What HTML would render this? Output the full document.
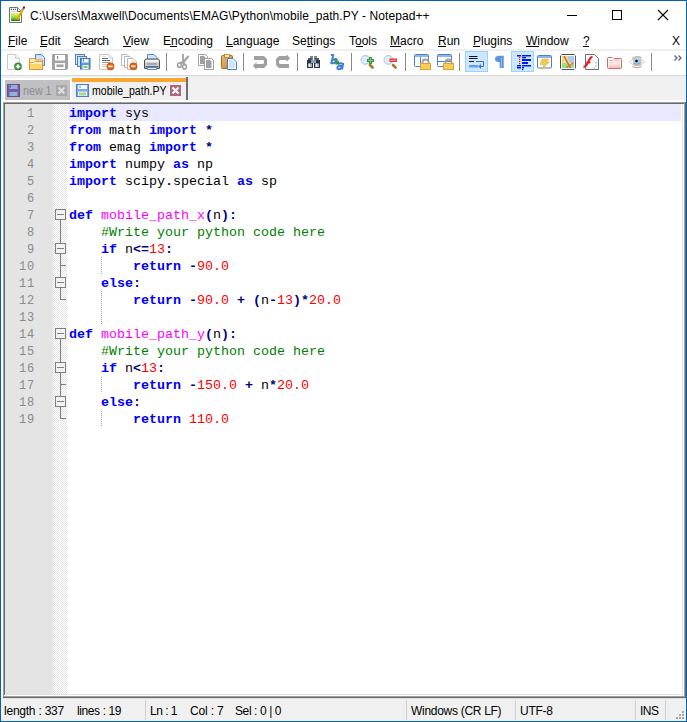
<!DOCTYPE html><html><head><meta charset="utf-8"><style>
*{margin:0;padding:0;box-sizing:border-box}
html,body{width:687px;height:722px;overflow:hidden;background:#fff}
body{position:relative;font-family:"Liberation Sans",sans-serif;font-size:12px;color:#000}
.a{position:absolute}
.t{position:absolute;white-space:pre;line-height:14px;height:14px;transform-origin:0 0}
.u{position:absolute;height:1px;background:#000}
svg{position:absolute;overflow:visible}
.code{position:absolute;left:69px;top:105px;font-family:"Liberation Mono",monospace;font-size:13.333px}
.ln{height:17px;line-height:17px;white-space:pre}
.k{color:#0000ff;font-weight:bold}
.o{color:#000080;font-weight:bold}
.n{color:#ff0000}
.f{color:#ff00ff}
.c{color:#008000}
.nums{position:absolute;left:5px;top:106px;width:30px;font-family:"Liberation Mono",monospace;font-size:12px;letter-spacing:0.8px;color:#8a8a8a;text-align:right}
.nums div{height:17px;line-height:17px}
.sep{position:absolute;width:1px;background:#888}
</style></head><body>
<div class="t" style="left:30px;top:9px;letter-spacing:0.078px">C:\Users\Maxwell\Documents\EMAG\Python\mobile_path.PY - Notepad++</div>
<svg style="left:9px;top:7px" width="16" height="16" viewBox="0 0 16 16">
<defs><linearGradient id="gn" x1="0" y1="0" x2="0" y2="1"><stop offset="0" stop-color="#f0f088"/><stop offset="0.45" stop-color="#a8e040"/><stop offset="0.8" stop-color="#50b030"/><stop offset="1" stop-color="#0a7a0a"/></linearGradient></defs>
<path d="M0.5 0.5H8.5L12.5 4.5V15.5H0.5Z" fill="#fff" stroke="#707070"/>
<path d="M8.5 0.5V4.5H12" fill="#fff" stroke="#707070"/>
<rect x="1.8" y="1.8" width="1.2" height="1.2" fill="#555"/><rect x="3.8" y="1.8" width="1.2" height="1.2" fill="#555"/><rect x="5.8" y="1.8" width="1.2" height="1.2" fill="#555"/>
<path d="M2 4.5H8" stroke="#c0d4ec"/>
<rect x="2" y="6" width="9" height="8" fill="url(#gn)"/>
<path d="M8 13L13.8 2.5" stroke="#f0a800" stroke-width="2.4"/>
<path d="M13.6 2.8L14.6 1" stroke="#7a9ad0" stroke-width="2"/>
<rect x="14" y="-0.5" width="2" height="2" fill="#a80000"/>
<path d="M7.6 13.6L8.2 12.4" stroke="#5a4020" stroke-width="1.2"/>
</svg>
<div class="a" style="left:567px;top:15px;width:10px;height:1px;background:#000"></div>
<div class="a" style="left:612px;top:10px;width:10px;height:10px;border:1px solid #000"></div>
<svg style="left:658px;top:10px" width="10" height="10" viewBox="0 0 10 10"><path d="M0 0L10 10M10 0L0 10" stroke="#000" stroke-width="1.1"/></svg>
<div class="t" style="left:8px;top:34px;letter-spacing:0">File</div>
<div class="t" style="left:40px;top:34px;letter-spacing:0">Edit</div>
<div class="t" style="left:74px;top:34px;letter-spacing:-0.6px">Search</div>
<div class="t" style="left:123px;top:34px;letter-spacing:0">View</div>
<div class="t" style="left:163px;top:34px;letter-spacing:0">Encoding</div>
<div class="t" style="left:226px;top:34px;letter-spacing:0">Language</div>
<div class="t" style="left:292px;top:34px;letter-spacing:0">Settings</div>
<div class="t" style="left:349px;top:34px;letter-spacing:0">Tools</div>
<div class="t" style="left:390px;top:34px;letter-spacing:0">Macro</div>
<div class="t" style="left:438px;top:34px;letter-spacing:0">Run</div>
<div class="t" style="left:473px;top:34px;letter-spacing:0">Plugins</div>
<div class="t" style="left:526px;top:34px;letter-spacing:0">Window</div>
<div class="t" style="left:583px;top:34px;letter-spacing:0">?</div>
<div class="t" style="left:672px;top:34px">X</div>
<div class="u" style="left:8px;top:46px;width:7px"></div>
<div class="u" style="left:40px;top:46px;width:7px"></div>
<div class="u" style="left:74px;top:46px;width:7px"></div>
<div class="u" style="left:123px;top:46px;width:8px"></div>
<div class="u" style="left:170px;top:46px;width:7px"></div>
<div class="u" style="left:226px;top:46px;width:7px"></div>
<div class="u" style="left:307px;top:46px;width:5px"></div>
<div class="u" style="left:356px;top:46px;width:7px"></div>
<div class="u" style="left:390px;top:46px;width:11px"></div>
<div class="u" style="left:438px;top:46px;width:8px"></div>
<div class="u" style="left:473px;top:46px;width:7px"></div>
<div class="u" style="left:526px;top:46px;width:13px"></div>
<div class="u" style="left:583px;top:46px;width:6px"></div>
<div class="a" style="left:1px;top:49px;width:685px;height:2px;background:#f0f0f0"></div>
<div class="sep" style="left:166px;top:53px;height:18px"></div>
<div class="sep" style="left:243px;top:53px;height:18px"></div>
<div class="sep" style="left:297px;top:53px;height:18px"></div>
<div class="sep" style="left:351px;top:53px;height:18px"></div>
<div class="sep" style="left:405px;top:53px;height:18px"></div>
<div class="sep" style="left:459px;top:53px;height:18px"></div>
<div class="sep" style="left:651px;top:53px;height:18px"></div>
<div class="a" style="left:465px;top:51px;width:23px;height:21px;background:#cce8ff;border:1px solid #99d1ff"></div>
<div class="a" style="left:511px;top:51px;width:23px;height:21px;background:#cce8ff;border:1px solid #99d1ff"></div>
<svg style="left:674px;top:55px" width="8" height="6" viewBox="0 0 8 6"><path d="M0.5 0.5L3 3L0.5 5.5M4.5 0.5L7 3L4.5 5.5" fill="none" stroke="#5b5ba0" stroke-width="1.3"/></svg>
<svg style="left:6px;top:54px" width="16" height="16" viewBox="0 0 16 16"><path d="M1.5 0.5H9.5L13.5 4.5V15.5H1.5Z" fill="#fff" stroke="#c8c8c8"/><path d="M9.5 0.5V4.5H13.5" fill="#f0f0f0" stroke="#d0d0d0"/>
<path d="M3 3h5M3 5h5" stroke="#f0f0f0"/>
<circle cx="12" cy="12.4" r="3.6" fill="#3f9a3f" stroke="#2c7a2c" stroke-width="0.7"/><path d="M12 10.2V14.6M9.8 12.4H14.2" stroke="#fff" stroke-width="1.5"/></svg>
<svg style="left:29px;top:54px" width="16" height="16" viewBox="0 0 16 16"><path d="M6.5 0.5H12.5L15.5 3.5V11.5H6.5Z" fill="#cfe2fb" stroke="#4a86d8"/>
<path d="M0.5 4.5H6L7 6H13.5V15.5H0.5Z" fill="#fdf0c0" stroke="#e2932d"/><rect x="1" y="10" width="12" height="5" fill="#f7d96a"/><path d="M1 8.5H4.5L5.5 7.5H13" stroke="#eaa040" fill="none"/></svg>
<svg style="left:52px;top:54px" width="16" height="16" viewBox="0 0 16 16"><path d="M0.5 0.5H15.5V14.5L14.5 15.5H0.5Z" fill="#a3a3a3" stroke="#a0a0a0"/><rect x="3" y="1" width="10" height="5.5" fill="#fff"/><rect x="5" y="2" width="1.2" height="3" fill="#8a8a8a"/>
<rect x="3" y="9" width="10" height="6" fill="#fff"/><rect x="4.5" y="10.5" width="7" height="2.5" fill="#a0a0a0"/></svg>
<svg style="left:75px;top:54px" width="16" height="16" viewBox="0 0 16 16"><rect x="0.5" y="0.5" width="9" height="10" fill="#d8e6f8" stroke="#4d7fc8"/><rect x="2.5" y="2.5" width="9" height="10" fill="#d8e6f8" stroke="#4d7fc8"/>
<rect x="5.5" y="4.5" width="9.5" height="10.5" fill="#5d9be0" stroke="#3a6fb8"/><rect x="7" y="5" width="6.5" height="3.5" fill="#fff"/><rect x="8" y="5.5" width="1" height="2" fill="#3a6fb8"/><rect x="7.5" y="11" width="6" height="4" fill="#fff"/><rect x="8.5" y="12" width="4" height="2" fill="#7ad04a"/></svg>
<svg style="left:99px;top:54px" width="16" height="16" viewBox="0 0 16 16"><path d="M0.5 0.5H10L13.5 4V15.5H0.5Z" fill="#fff" stroke="#c4c4c4"/><path d="M10 0.5V4H13.5" fill="none" stroke="#d8d8d8"/>
<path d="M3 2.5H8" stroke="#e8e8e8"/><path d="M3 4.5H9M3 6.5H11" stroke="#6a6a6a"/><path d="M3 8.5H11" stroke="#9a9a9a"/><path d="M3 10.5H8M3 12.5H8" stroke="#c8c8c8"/>
<circle cx="11.5" cy="12.4" r="3.6" fill="#e86010" stroke="#c84800" stroke-width="0.6"/><path d="M9.4 12.4H13.6" stroke="#fff" stroke-width="1.6"/></svg>
<svg style="left:121px;top:54px" width="16" height="16" viewBox="0 0 16 16"><path d="M0.5 0.5H6L8.5 3V11.5H0.5Z" fill="#fff" stroke="#b8b8b8"/><path d="M3.5 2.5H9L11.5 5V13.5H3.5Z" fill="#fff" stroke="#b8b8b8"/><path d="M6.5 4.5H12L15.5 8V15.5H6.5Z" fill="#fff" stroke="#b8b8b8"/>
<path d="M8.5 7.5H12" stroke="#e8e8e8"/>
<circle cx="12.4" cy="12.3" r="3.6" fill="#e86010" stroke="#c84800" stroke-width="0.6"/><path d="M10.3 12.3H14.5" stroke="#fff" stroke-width="1.6"/></svg>
<svg style="left:144px;top:54px" width="16" height="16" viewBox="0 0 16 16"><path d="M3.5 0.5H10L13 3.5V7.5H3.5Z" fill="#d2e6fb" stroke="#4a8ad8"/>
<path d="M0.5 7Q0.5 5 2.5 5H13.5Q15.5 5 15.5 7V14.5H0.5Z" fill="#d0d0d0" stroke="#505050"/><rect x="1.5" y="6" width="13" height="2" fill="#f4f4f4"/><rect x="3" y="9" width="10" height="2" fill="#a8a8a8"/><rect x="1.5" y="12" width="13" height="1.5" fill="#666"/>
<path d="M3.5 13.5H12.5V15.5H3.5Z" fill="#eef6ff" stroke="#4a8ad8"/></svg>
<svg style="left:177px;top:54px" width="16" height="16" viewBox="0 0 16 16"><path d="M6 0V9" stroke="#a0a0a0" stroke-width="1.8"/><path d="M11.5 2L6.5 8" stroke="#a0a0a0" stroke-width="2"/>
<ellipse cx="2.4" cy="11.2" rx="1.8" ry="2.2" fill="none" stroke="#a0a0a0" stroke-width="1.6"/><ellipse cx="7.5" cy="12.8" rx="1.9" ry="2.3" fill="none" stroke="#a0a0a0" stroke-width="1.6"/><path d="M2.5 8.8L6 8.5L8 10.5" stroke="#a0a0a0" stroke-width="2" fill="none"/></svg>
<svg style="left:198px;top:54px" width="16" height="16" viewBox="0 0 16 16"><path d="M0.5 0.5H7.5L9.5 2.5V11.5H0.5Z" fill="#fff" stroke="#a0a0a0"/><path d="M2 2H6L7.5 3.5V10H2Z" fill="#a0a0a0"/>
<path d="M6.5 4.5H13.5L15.5 6.5V15.5H6.5Z" fill="#fff" stroke="#a0a0a0"/><path d="M8 6H12L13.5 7.5V14H8Z" fill="#a0a0a0"/></svg>
<svg style="left:221px;top:54px" width="16" height="16" viewBox="0 0 16 16"><defs><linearGradient id="pg" x1="0" y1="0" x2="1" y2="1"><stop offset="0" stop-color="#f0c070"/><stop offset="1" stop-color="#c88030"/></linearGradient></defs>
<rect x="0.5" y="1.5" width="11" height="13" rx="1" fill="url(#pg)" stroke="#a86a20"/><rect x="3.5" y="0.5" width="5" height="3" fill="#fff0a0" stroke="#b87a30" stroke-width="0.8"/>
<path d="M6.5 4.5H12L15.5 8V15.5H6.5Z" fill="#fff" stroke="#3f7fd6"/><path d="M8 6H11.5L14 8.5V14H8Z" fill="#cfe2fa"/></svg>
<svg style="left:252px;top:54px" width="16" height="16" viewBox="0 0 16 16"><path d="M2 2H12L15 5V11L12 14H4.5V15.8L1 11.8L4.5 8V10H11L12 9V7L11 6H2Z" fill="#a0a0a0"/></svg>
<svg style="left:275px;top:54px" width="16" height="16" viewBox="0 0 16 16"><path d="M2 2H12L15 5V11L12 14H4.5V15.8L1 11.8L4.5 8V10H11L12 9V7L11 6H2Z" fill="#a0a0a0" transform="rotate(180 8 8)"/></svg>
<svg style="left:307px;top:56px" width="16" height="16" viewBox="0 0 16 16"><rect x="3" y="0" width="3" height="5" fill="#7a8490"/><rect x="7" y="0" width="3" height="5" fill="#7a8490"/><rect x="1" y="2" width="4" height="5" fill="#505a66"/><rect x="8" y="2" width="4" height="5" fill="#505a66"/>
<rect x="0" y="4" width="6" height="8" fill="#2c3440"/><rect x="7" y="4" width="6" height="8" fill="#2c3440"/><rect x="4" y="4" width="5" height="3" fill="#8aa0bc"/>
<rect x="1" y="7.5" width="4" height="3.5" fill="#a8b4c4"/><rect x="8" y="7.5" width="4" height="3.5" fill="#a8b4c4"/><rect x="2" y="7.5" width="1" height="3.5" fill="#e8eef4"/><rect x="9" y="7.5" width="1" height="3.5" fill="#e8eef4"/></svg>
<svg style="left:329px;top:54px" width="16" height="16" viewBox="0 0 16 16"><g fill="none" stroke="#3a7fe0" stroke-width="1.9"><path d="M2 1H5M4.3 0.8L2.3 9.2"/><path d="M3 6.5Q5 4.5 7 5Q8.6 5.6 7.6 7.6Q6.6 9.3 4.5 9.3H1.5"/>
<path d="M9.2 9.8Q11 8.8 13.3 9.4M14.3 9L13 15.5M13.2 12Q12.5 15.3 9.5 15.2Q7.8 15 8.5 13Q9.3 11.3 13.2 11.8"/></g>
<path d="M5 5.5L8.3 8.8" stroke="#3c9c3c" stroke-width="2"/><path d="M6 10.5H10V6.5Z" fill="#2a8a2a"/></svg>
<svg style="left:359px;top:55px" width="16" height="16" viewBox="0 0 16 16"><path d="M11 10L13.5 12.5" stroke="#b07838" stroke-width="2.8" stroke-linecap="round"/><circle cx="6.4" cy="4.9" r="4.4" fill="#dae8f8" stroke="#a8c4e8"/><circle cx="6" cy="5" r="2.6" fill="none" stroke="#eef5fd"/>
<rect x="10" y="2" width="3" height="7" fill="#3a923a"/><rect x="8" y="4" width="7" height="3" fill="#3a923a"/><rect x="11" y="3" width="1" height="5" fill="#8cc878"/><rect x="9" y="5" width="5" height="1" fill="#8cc878"/></svg>
<svg style="left:382px;top:55px" width="16" height="16" viewBox="0 0 16 16"><path d="M11 10L13.5 12.5" stroke="#b07838" stroke-width="2.8" stroke-linecap="round"/><circle cx="6.4" cy="4.9" r="4.4" fill="#dae8f8" stroke="#a8c4e8"/><circle cx="6" cy="5" r="2.6" fill="none" stroke="#eef5fd"/>
<rect x="7.5" y="3.5" width="7.5" height="3.5" fill="#e8303a"/><rect x="8.5" y="4.8" width="5.5" height="1" fill="#f8b0b0"/></svg>
<svg style="left:414px;top:54px" width="16" height="16" viewBox="0 0 16 16"><rect x="0.5" y="0.5" width="14" height="12" rx="1" fill="#fff" stroke="#4a7fd0"/><rect x="1" y="1" width="13" height="2" fill="#8fb4ea"/><path d="M6.5 3V12.5" stroke="#4a7fd0"/>
<path d="M8.5 10V8Q8.5 5.5 11.5 5.5Q14.5 5.5 14.5 8V10" fill="none" stroke="#a0a0a0" stroke-width="1.8"/><rect x="6.5" y="9.5" width="10" height="6" fill="#f6cc5a" stroke="#e0a030"/></svg>
<svg style="left:437px;top:54px" width="16" height="16" viewBox="0 0 16 16"><rect x="0.5" y="0.5" width="14" height="12" rx="1" fill="#fff" stroke="#4a7fd0"/><rect x="1" y="1" width="13" height="2" fill="#8fb4ea"/><path d="M1 7.5H14" stroke="#4a7fd0"/>
<path d="M8.5 10V8Q8.5 5.5 11.5 5.5Q14.5 5.5 14.5 8V10" fill="none" stroke="#a0a0a0" stroke-width="1.8"/><rect x="6.5" y="9.5" width="10" height="6" fill="#f6cc5a" stroke="#e0a030"/></svg>
<svg style="left:468px;top:54px" width="16" height="16" viewBox="0 0 16 16"><path d="M1 2.5H9.5M1 4.5H9.5M1 7.5H6" stroke="#151515" stroke-width="1.2"/><path d="M8 7.5H15.5V12.5H12" fill="none" stroke="#3a70c0" stroke-width="1"/><path d="M10.5 12.5L13 10V15Z" fill="#3a70c0"/><rect x="1" y="11" width="9.5" height="2.5" fill="#6a9ee0"/></svg>
<svg style="left:494px;top:56px" width="16" height="16" viewBox="0 0 16 16"><path d="M4 0.8H8.8V12M6.6 0.8V12" fill="none" stroke="#5b95e0" stroke-width="1.9"/><path d="M4.5 0H6.5V6H4.5Q1 6 1 3Q1 0 4.5 0Z" fill="#5b95e0"/></svg>
<svg style="left:517px;top:55px" width="16" height="16" viewBox="0 0 16 16"><g fill="#0018f0"><rect x="0" y="0" width="4" height="1.5"/><rect x="5" y="0" width="9" height="1.5"/><rect x="5" y="2" width="4" height="1.3"/><rect x="5" y="4" width="9" height="2"/><rect x="5" y="7" width="6" height="2"/>
<rect x="0" y="10" width="4" height="1.5"/><rect x="5" y="10" width="9" height="1.5"/><rect x="0" y="12" width="4" height="1.5"/><rect x="5" y="12" width="2" height="1.5"/><rect x="5" y="14" width="1.2" height="1.2"/></g>
<g fill="#f01010"><rect x="2" y="2" width="1.2" height="1.2"/><rect x="2" y="4" width="1.2" height="1.2"/><rect x="2" y="6" width="1.2" height="1.2"/><rect x="2" y="8" width="1.2" height="1.2"/></g></svg>
<svg style="left:537px;top:55px" width="16" height="16" viewBox="0 0 16 16"><rect x="0.5" y="0.5" width="14" height="12.5" rx="1" fill="#fff" stroke="#4a7fd0"/><rect x="1" y="1" width="13" height="2" fill="#8fb4ea"/><path d="M5 4H12L9.5 7H12.5L5 14.5L7 9.5H3Z" fill="#f2cc50" stroke="#e8b030" stroke-width="0.6"/></svg>
<svg style="left:560px;top:54px" width="16" height="16" viewBox="0 0 16 16"><rect x="1" y="1" width="14" height="14" fill="#fff"/><rect x="2" y="2" width="12" height="12" fill="#e2e488"/><path d="M7.5 2H14V8.5L9.5 9Z" fill="#a8ccf0"/><path d="M2 9.5L6 9L9 10.5L14 9.5V14H2Z" fill="#98e078"/>
<path d="M1.5 0.5H14.5M0.5 1.5V14.5" stroke="#4e4e2a"/><path d="M15.5 1.5V14.5M1.5 15.5H14.5" stroke="#50508c"/>
<path d="M4 2L10.5 14" stroke="#f04848" stroke-width="1.4"/><path d="M6 13.5L14 8.5" stroke="#f07030" stroke-width="1.4"/></svg>
<svg style="left:583px;top:54px" width="16" height="16" viewBox="0 0 16 16"><path d="M2.5 0.5H11.5L15.5 4.5V15.5H2.5Z" fill="#fff" stroke="#6e6e6e"/>
<path d="M13 8v1.5M13 11v1.5M12 13.5l-0.5 1" stroke="#8a94a4"/><path d="M9 8v0.5M9 13v0.5" stroke="#90c890"/>
<path d="M0.5 12.8Q2.5 13 3.8 10.5L7 4.5Q8 3 9.5 3.2" fill="none" stroke="#e81c1c" stroke-width="2.2"/><path d="M3.5 8.5H7.5" stroke="#e81c1c" stroke-width="1.8"/></svg>
<svg style="left:607px;top:57px" width="16" height="16" viewBox="0 0 16 16"><defs><linearGradient id="fg" x1="0" y1="0" x2="0" y2="1"><stop offset="0" stop-color="#fbeaea"/><stop offset="1" stop-color="#f0c0c0"/></linearGradient></defs>
<path d="M1 0.5H5.5M0.5 1V10.5Q0.5 11.5 1.5 11.5H13Q14.5 11.5 14.5 10V2.5Q14.5 1.5 13.5 1.5H7" fill="none" stroke="#d46a6a" stroke-width="1"/><rect x="1.5" y="6" width="12" height="5" fill="url(#fg)"/><path d="M2 3.5H5L6 3H13" stroke="#eaa8a8" fill="none"/><path d="M1.5 5.5H6L7 5H13.5" stroke="#f4d0d0" fill="none"/></svg>
<svg style="left:629px;top:56px" width="16" height="16" viewBox="0 0 16 16"><path d="M0.5 6Q8 -2 15.5 6Q8 14 0.5 6Z" fill="#fffdf8" stroke="#f0c890" stroke-width="1"/><path d="M3 2.8Q8 -0.5 12.5 2" stroke="#bcbcbc" fill="none" stroke-width="1.6"/><path d="M3.5 10.5Q8 12.8 12.5 10.5" stroke="#eaa27a" fill="none" stroke-width="1.3"/>
<rect x="4" y="3" width="8.5" height="6.5" rx="2" fill="#a4c8f2"/><circle cx="7.5" cy="5" r="1.3" fill="#0a0a0a"/><path d="M5 7.5Q8 9 11 7.5" stroke="#6a98d0" fill="none" stroke-width="0.8"/></svg>
<div class="a" style="left:1px;top:75px;width:685px;height:25px;background:#f0f0f0"></div>
<div class="a" style="left:1px;top:75px;width:685px;height:1px;background:#dadada"></div>
<div class="a" style="left:3px;top:78px;width:68px;height:22px;background:#fff"></div>
<div class="a" style="left:5px;top:80px;width:65px;height:20px;background:#c0c0c0"></div>
<svg style="left:7px;top:84px" width="13" height="13" viewBox="0 0 13 13"><rect x="0.5" y="0.5" width="12" height="12" fill="#7a5aa0" stroke="#6a4a90"/><rect x="2.5" y="1" width="8" height="4" fill="#8fb0e0"/><rect x="3" y="1.5" width="1" height="2" fill="#6a4a90"/><rect x="2.5" y="8" width="8" height="4" fill="#8fb0e0"/></svg>
<div class="t" style="left:23px;top:84px;color:#8a8a98;transform:scaleX(0.89);transform-origin:0 0">new 1</div>
<svg style="left:56px;top:85px" width="11" height="11" viewBox="0 0 11 11"><rect width="11" height="11" fill="#a8a8a8"/><path d="M2.5 2.5L8.5 8.5M8.5 2.5L2.5 8.5" stroke="#e0e0e0" stroke-width="2"/></svg>
<div class="a" style="left:71px;top:77px;width:115px;height:24px;background:#fff"></div>
<div class="a" style="left:72px;top:78px;width:114px;height:23px;background:#f0f0f0"></div>
<div class="a" style="left:72px;top:78px;width:114px;height:4px;background:#faa632"></div>
<div class="a" style="left:186px;top:77px;width:2px;height:24px;background:#6e6e6e"></div>
<svg style="left:76px;top:84px" width="13" height="13" viewBox="0 0 13 13"><rect x="0.5" y="0.5" width="12" height="12" fill="#7aa6e4" stroke="#4a80d0"/><rect x="2" y="1" width="9" height="4" fill="#f4f8ff"/><rect x="3.5" y="1.5" width="1" height="2.5" fill="#5a8ad0"/><rect x="2" y="7.5" width="9" height="4.5" fill="#eef6ff"/><rect x="3" y="8.5" width="7" height="3" fill="#a8d888"/></svg>
<div class="t" style="left:92px;top:84px;transform:scaleX(0.88);transform-origin:0 0">mobile_path.PY</div>
<svg style="left:170px;top:85px" width="11" height="11" viewBox="0 0 11 11"><rect width="11" height="11" fill="#a86a80"/><path d="M2.5 2.5L8.5 8.5M8.5 2.5L2.5 8.5" stroke="#fff" stroke-width="2"/></svg>
<div class="a" style="left:1px;top:100px;width:685px;height:2px;background:#fff"></div>
<div class="a" style="left:3px;top:102px;width:683px;height:1px;background:#a0a0a0"></div>
<div class="a" style="left:3px;top:103px;width:682px;height:1px;background:#696969"></div>
<div class="a" style="left:3px;top:102px;width:1px;height:594px;background:#a0a0a0"></div>
<div class="a" style="left:4px;top:103px;width:1px;height:592px;background:#696969"></div>
<div class="a" style="left:682px;top:104px;width:1px;height:591px;background:#e3e3e3"></div>
<div class="a" style="left:5px;top:694px;width:678px;height:1px;background:#e3e3e3"></div>
<div class="a" style="left:684px;top:102px;width:1px;height:595px;background:#a0a0a0"></div>
<div class="a" style="left:685px;top:102px;width:1px;height:596px;background:#696969"></div>
<div class="a" style="left:3px;top:696px;width:682px;height:1px;background:#a0a0a0"></div>
<div class="a" style="left:3px;top:697px;width:683px;height:1px;background:#696969"></div>
<div class="a" style="left:5px;top:104px;width:48px;height:590px;background:#e4e4e4"></div>
<div class="a" style="left:53px;top:104px;width:14px;height:590px;background-color:#fff;background-image:repeating-conic-gradient(#e4e4e4 0 25%,#fff 0 50%);background-size:2px 2px"></div>
<div class="a" style="left:68px;top:104px;width:613px;height:17px;background:#e8e8ff"></div>
<div class="a" style="left:55px;top:209px;width:11px;height:11px;border:1px solid #808080;background:#f2f2f2"></div><div class="a" style="left:57px;top:214px;width:7px;height:1px;background:#808080"></div>
<div class="a" style="left:55px;top:243px;width:11px;height:11px;border:1px solid #808080;background:#f2f2f2"></div><div class="a" style="left:57px;top:248px;width:7px;height:1px;background:#808080"></div>
<div class="a" style="left:55px;top:277px;width:11px;height:11px;border:1px solid #808080;background:#f2f2f2"></div><div class="a" style="left:57px;top:282px;width:7px;height:1px;background:#808080"></div>
<div class="a" style="left:60px;top:220px;width:1px;height:23px;background:#808080"></div>
<div class="a" style="left:60px;top:254px;width:1px;height:23px;background:#808080"></div>
<div class="a" style="left:61px;top:265px;width:5px;height:1px;background:#808080"></div>
<div class="a" style="left:60px;top:288px;width:1px;height:12px;background:#808080"></div>
<div class="a" style="left:61px;top:299px;width:5px;height:1px;background:#808080"></div>
<div class="a" style="left:55px;top:328px;width:11px;height:11px;border:1px solid #808080;background:#f2f2f2"></div><div class="a" style="left:57px;top:333px;width:7px;height:1px;background:#808080"></div>
<div class="a" style="left:55px;top:362px;width:11px;height:11px;border:1px solid #808080;background:#f2f2f2"></div><div class="a" style="left:57px;top:367px;width:7px;height:1px;background:#808080"></div>
<div class="a" style="left:55px;top:396px;width:11px;height:11px;border:1px solid #808080;background:#f2f2f2"></div><div class="a" style="left:57px;top:401px;width:7px;height:1px;background:#808080"></div>
<div class="a" style="left:60px;top:339px;width:1px;height:23px;background:#808080"></div>
<div class="a" style="left:60px;top:373px;width:1px;height:23px;background:#808080"></div>
<div class="a" style="left:61px;top:384px;width:5px;height:1px;background:#808080"></div>
<div class="a" style="left:60px;top:407px;width:1px;height:12px;background:#808080"></div>
<div class="a" style="left:61px;top:418px;width:5px;height:1px;background:#808080"></div>
<div class="a" style="left:101px;top:257px;width:1px;height:17px;background-image:linear-gradient(#a0a0a0 50%,transparent 50%);background-size:1px 2px;background-position:0 0px"></div>
<div class="a" style="left:101px;top:291px;width:1px;height:17px;background-image:linear-gradient(#a0a0a0 50%,transparent 50%);background-size:1px 2px;background-position:0 0px"></div>
<div class="a" style="left:101px;top:308px;width:1px;height:17px;background-image:linear-gradient(#a0a0a0 50%,transparent 50%);background-size:1px 2px;background-position:0 1px"></div>
<div class="a" style="left:101px;top:376px;width:1px;height:17px;background-image:linear-gradient(#a0a0a0 50%,transparent 50%);background-size:1px 2px;background-position:0 1px"></div>
<div class="a" style="left:101px;top:410px;width:1px;height:17px;background-image:linear-gradient(#a0a0a0 50%,transparent 50%);background-size:1px 2px;background-position:0 1px"></div>
<div class="nums"><div>1</div><div>2</div><div>3</div><div>4</div><div>5</div><div>6</div><div>7</div><div>8</div><div>9</div><div>10</div><div>11</div><div>12</div><div>13</div><div>14</div><div>15</div><div>16</div><div>17</div><div>18</div><div>19</div></div>
<div class="code"><div class="ln"><span class="k">import</span> sys</div>
<div class="ln"><span class="k">from</span> math <span class="k">import</span> <span class="o">*</span></div>
<div class="ln"><span class="k">from</span> emag <span class="k">import</span> <span class="o">*</span></div>
<div class="ln"><span class="k">import</span> numpy <span class="k">as</span> np</div>
<div class="ln"><span class="k">import</span> scipy<span class="o">.</span>special <span class="k">as</span> sp</div>
<div class="ln"></div>
<div class="ln"><span class="k">def</span> <span class="f">mobile_path_x</span><span class="o">(</span>n<span class="o">):</span></div>
<div class="ln">    <span class="c">#Write your python code here</span></div>
<div class="ln">    <span class="k">if</span> n<span class="o">&lt;=</span><span class="n">13</span><span class="o">:</span></div>
<div class="ln">        <span class="k">return</span> <span class="o">-</span><span class="n">90.0</span></div>
<div class="ln">    <span class="k">else</span><span class="o">:</span></div>
<div class="ln">        <span class="k">return</span> <span class="o">-</span><span class="n">90.0</span> <span class="o">+</span> <span class="o">(</span>n<span class="o">-</span><span class="n">13</span><span class="o">)*</span><span class="n">20.0</span></div>
<div class="ln"></div>
<div class="ln"><span class="k">def</span> <span class="f">mobile_path_y</span><span class="o">(</span>n<span class="o">):</span></div>
<div class="ln">    <span class="c">#Write your python code here</span></div>
<div class="ln">    <span class="k">if</span> n<span class="o">&lt;</span><span class="n">13</span><span class="o">:</span></div>
<div class="ln">        <span class="k">return</span> <span class="o">-</span><span class="n">150.0</span> <span class="o">+</span> n<span class="o">*</span><span class="n">20.0</span></div>
<div class="ln">    <span class="k">else</span><span class="o">:</span></div>
<div class="ln">        <span class="k">return</span> <span class="n">110.0</span></div></div>
<div class="a" style="left:1px;top:698px;width:685px;height:23px;background:#f0f0f0"></div>
<div class="a" style="left:3px;top:698px;width:683px;height:1px;background:#e3e3e3"></div>
<div class="a" style="left:145px;top:700px;width:1px;height:20px;background:#d0d0d0"></div>
<div class="a" style="left:406px;top:700px;width:1px;height:20px;background:#d0d0d0"></div>
<div class="a" style="left:515px;top:700px;width:1px;height:20px;background:#d0d0d0"></div>
<div class="a" style="left:635px;top:700px;width:1px;height:20px;background:#d0d0d0"></div>
<div class="a" style="left:665px;top:700px;width:1px;height:20px;background:#d0d0d0"></div>
<div class="t" style="left:4px;top:704px;letter-spacing:-0.23px">length : 337</div>
<div class="t" style="left:77px;top:704px;letter-spacing:-0.39px">lines : 19</div>
<div class="t" style="left:150px;top:704px;letter-spacing:-0.5px">Ln : 1</div>
<div class="t" style="left:190px;top:704px;letter-spacing:-0.17px">Col : 7</div>
<div class="t" style="left:235px;top:704px;letter-spacing:-0.4px">Sel : 0 | 0</div>
<div class="t" style="left:411px;top:704px;letter-spacing:-0.29px">Windows (CR LF)</div>
<div class="t" style="left:520px;top:704px;letter-spacing:-0.25px">UTF-8</div>
<div class="t" style="left:640px;top:704px;letter-spacing:-0.5px">INS</div>
<div class="a" style="left:682px;top:711px;width:2px;height:2px;background:#a8a8a8"></div>
<div class="a" style="left:679px;top:714px;width:2px;height:2px;background:#a8a8a8"></div>
<div class="a" style="left:682px;top:714px;width:2px;height:2px;background:#a8a8a8"></div>
<div class="a" style="left:676px;top:717px;width:2px;height:2px;background:#a8a8a8"></div>
<div class="a" style="left:679px;top:717px;width:2px;height:2px;background:#a8a8a8"></div>
<div class="a" style="left:682px;top:717px;width:2px;height:2px;background:#a8a8a8"></div>
<div class="a" style="left:0;top:0;width:687px;height:722px;border:1px solid #0563ae"></div>
</body></html>
